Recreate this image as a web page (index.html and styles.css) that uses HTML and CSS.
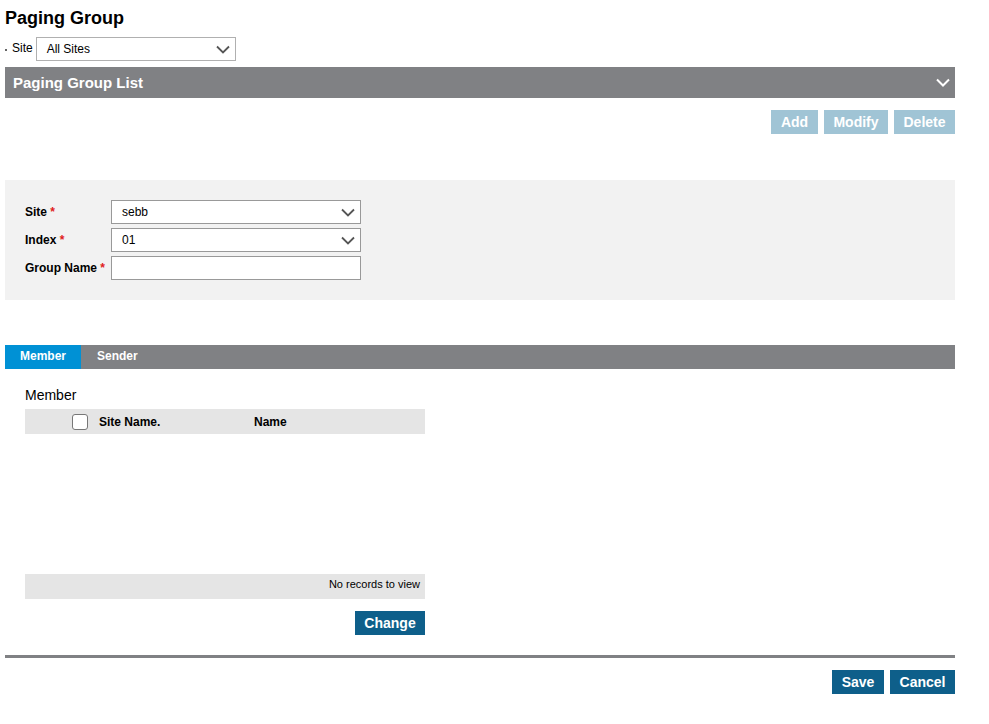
FILE: index.html
```html
<!DOCTYPE html>
<html>
<head>
<meta charset="utf-8">
<link rel="stylesheet" href="styles.css">
</head>
<body>
<div class="page">
  <h1 class="title">Paging Group</h1>
  <div class="site-filter">
    <span class="dot"></span>
    <span class="site-label">Site</span>
    <div class="select select-top">
      <span>All Sites</span>
      <svg class="chev" width="14" height="9" viewBox="0 0 14 9"><path d="M1 1.5 L7 7.5 L13 1.5" fill="none" stroke="#555" stroke-width="1.8"/></svg>
    </div>
  </div>
  <div class="section-bar">
    <span>Paging Group List</span>
    <svg width="14" height="9" viewBox="0 0 14 9"><path d="M1 1.5 L7 7.5 L13 1.5" fill="none" stroke="#fff" stroke-width="2"/></svg>
  </div>
  <div class="list-actions">
    <button class="btn btn-light btn-add">Add</button>
    <button class="btn btn-light btn-modify">Modify</button>
    <button class="btn btn-light btn-delete">Delete</button>
  </div>

  <div class="form-panel">
    <div class="form-row">
      <label class="form-label">Site <span class="req">*</span></label>
      <div class="select select-form"><span>sebb</span>
        <svg class="chev" width="14" height="9" viewBox="0 0 14 9"><path d="M1 1.5 L7 7.5 L13 1.5" fill="none" stroke="#555" stroke-width="1.8"/></svg>
      </div>
    </div>
    <div class="form-row">
      <label class="form-label">Index <span class="req">*</span></label>
      <div class="select select-form"><span>01</span>
        <svg class="chev" width="14" height="9" viewBox="0 0 14 9"><path d="M1 1.5 L7 7.5 L13 1.5" fill="none" stroke="#555" stroke-width="1.8"/></svg>
      </div>
    </div>
    <div class="form-row">
      <label class="form-label">Group Name <span class="req">*</span></label>
      <div class="input"></div>
    </div>
  </div>

  <div class="tabs">
    <div class="tab tab-active">Member</div>
    <div class="tab">Sender</div>
  </div>

  <div class="member-area">
    <div class="member-title">Member</div>
    <div class="grid">
      <div class="grid-head">
        <span class="cb"></span>
        <span class="col-site">Site Name.</span>
        <span class="col-name">Name</span>
      </div>
      <div class="grid-body"></div>
      <div class="grid-foot">No records to view</div>
    </div>
    <div class="change-row">
      <button class="btn btn-dark btn-change">Change</button>
    </div>
  </div>

  <div class="divider"></div>
  <div class="footer-actions">
    <button class="btn btn-dark btn-save">Save</button>
    <button class="btn btn-dark btn-cancel">Cancel</button>
  </div>
</div>
</body>
</html>
```
FILE: styles.css
```css
* { box-sizing: border-box; }
html, body { margin: 0; padding: 0; background: #fff; }
body { font-family: "Liberation Sans", Arial, sans-serif; color: #000; }
.page { width: 950px; margin-left: 5px; }

.title { font-size: 18px; font-weight: bold; margin: 0; padding-top: 8px; height: 37px; line-height: 20px; }

.site-filter { display: flex; align-items: center; height: 24px; margin-top: 0; }
.dot { width: 2px; height: 2px; background: #666; margin-right: 5px; margin-top: 2px; }
.site-label { font-size: 12px; margin-right: 3px; margin-top: -2px; }

.select { display: flex; align-items: center; justify-content: space-between; background: #fff; border: 1px solid #b0b0b0; font-size: 12px; }
.select-top { width: 200px; height: 24px; padding: 0 5px 0 10px; }
.select-form { width: 250px; height: 24px; padding: 0 5px 0 10px; border-color: #999; }
.input { width: 250px; height: 24px; border: 1px solid #999; background: #fff; }

.section-bar { margin-top: 6px; height: 31px; background: #808184; color: #fff; display: flex; align-items: center; justify-content: space-between; padding: 0 5px 0 8px; font-size: 15px; font-weight: bold; }

.btn { border: none; font-family: "Liberation Sans", Arial, sans-serif; font-weight: bold; color: #fff; height: 24px; padding: 0; cursor: pointer; }
.btn-light { background: #a0c4d5; font-size: 14px; }
.btn-dark { background: #0e5f8a; font-size: 14px; }

.list-actions { display: flex; justify-content: flex-end; gap: 6px; margin-top: 12px; }
.btn-add { width: 47px; }
.btn-modify { width: 64px; }
.btn-delete { width: 61px; }

.form-panel { margin-top: 46px; background: #f2f2f2; height: 120px; padding: 20px 0 0 20px; }
.form-row { display: flex; align-items: center; height: 24px; margin-bottom: 4px; }
.form-label { width: 86px; font-size: 12px; font-weight: bold; }
.req { color: #e0201a; }

.tabs { margin-top: 45px; height: 24px; background: #808184; display: flex; }
.tab { font-size: 12px; font-weight: bold; color: #fff; padding: 0 16px; line-height: 22px; }
.tab-active { background: #0091d5; width: 76px; padding: 0 0 0 15px; }

.member-area { padding-left: 20px; }
.member-title { font-size: 14px; margin-top: 18px; height: 22px; line-height: 16px; }
.grid { width: 400px; }
.grid-head { height: 25px; background: #e5e5e5; display: flex; align-items: center; font-size: 12px; font-weight: bold; }
.cb { width: 16px; height: 16px; border: 1px solid #777; border-radius: 3px; background: #fff; margin-left: 47px; margin-right: 11px; }
.col-site { width: 155px; }
.grid-body { height: 140px; }
.grid-foot { height: 25px; background: #e5e5e5; font-size: 11px; text-align: right; padding-right: 5px; line-height: 20px; }
.change-row { display: flex; justify-content: flex-end; width: 400px; margin-top: 12px; }
.btn-change { width: 70px; }

.divider { margin-top: 20px; height: 3px; background: #808184; }
.footer-actions { display: flex; justify-content: flex-end; gap: 6px; margin-top: 12px; }
.btn-save { width: 52px; }
.btn-cancel { width: 65px; }
```
